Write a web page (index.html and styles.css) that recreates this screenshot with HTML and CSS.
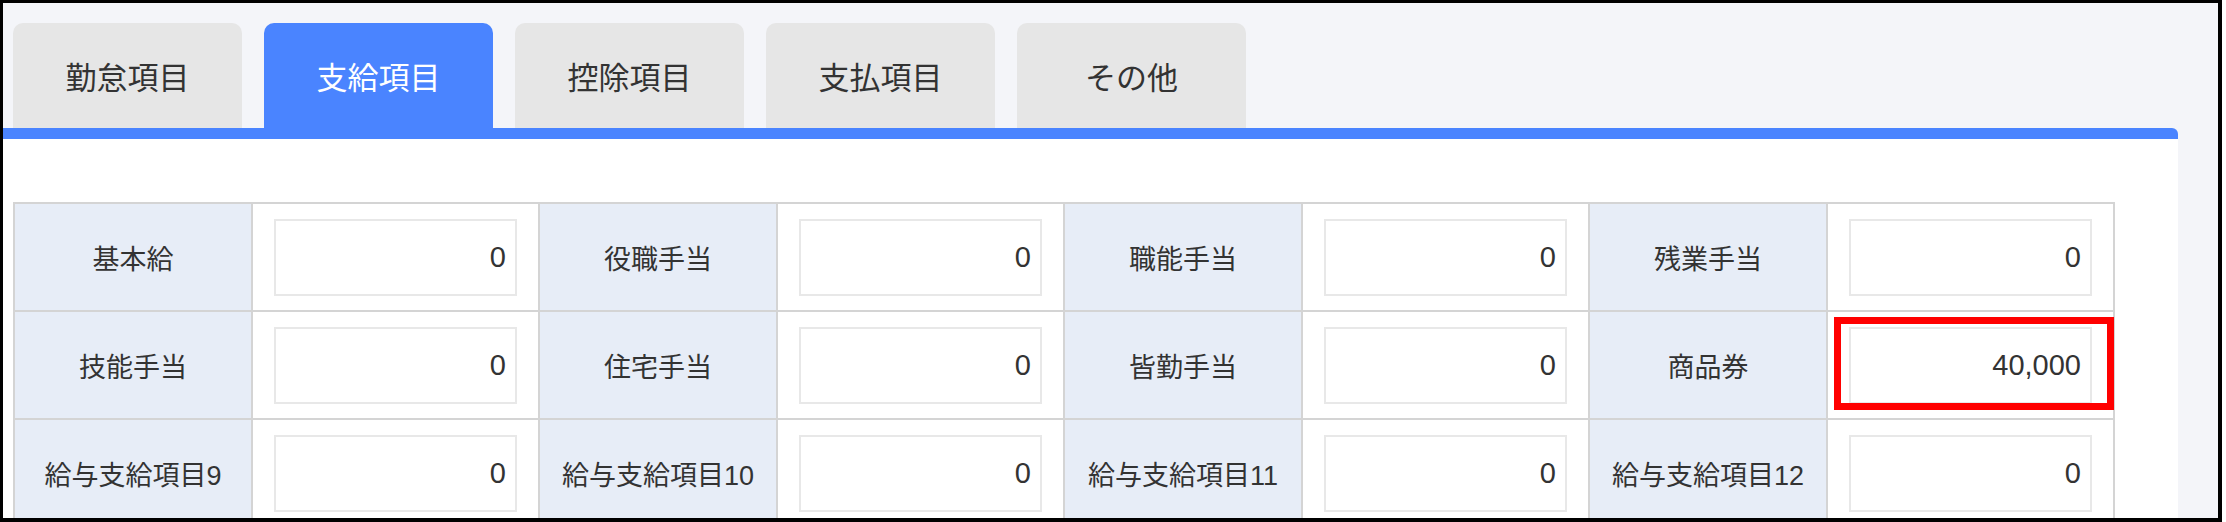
FILE: index.html
```html
<!DOCTYPE html>
<html lang="ja">
<head>
<meta charset="utf-8">
<title>支給項目</title>
<link rel="stylesheet" href="styles.css">
</head>
<body>
<div class="frame">
  <div class="tabs">
    <div class="tab">勤怠項目</div>
    <div class="tab active">支給項目</div>
    <div class="tab">控除項目</div>
    <div class="tab">支払項目</div>
    <div class="tab">その他</div>
  </div>
  <div class="panel">
    <div class="grid">
      <div class="label">基本給</div>
      <div class="field"><input class="num" type="text" value="0" readonly></div>
      <div class="label">役職手当</div>
      <div class="field"><input class="num" type="text" value="0" readonly></div>
      <div class="label">職能手当</div>
      <div class="field"><input class="num" type="text" value="0" readonly></div>
      <div class="label">残業手当</div>
      <div class="field"><input class="num" type="text" value="0" readonly></div>

      <div class="label">技能手当</div>
      <div class="field"><input class="num" type="text" value="0" readonly></div>
      <div class="label">住宅手当</div>
      <div class="field"><input class="num" type="text" value="0" readonly></div>
      <div class="label">皆勤手当</div>
      <div class="field"><input class="num" type="text" value="0" readonly></div>
      <div class="label">商品券</div>
      <div class="field highlighted"><input class="num" type="text" value="40,000" readonly><span class="mark"></span></div>

      <div class="label">給与支給項目9</div>
      <div class="field"><input class="num" type="text" value="0" readonly></div>
      <div class="label">給与支給項目10</div>
      <div class="field"><input class="num" type="text" value="0" readonly></div>
      <div class="label">給与支給項目11</div>
      <div class="field"><input class="num" type="text" value="0" readonly></div>
      <div class="label">給与支給項目12</div>
      <div class="field"><input class="num" type="text" value="0" readonly></div>
    </div>
  </div>
</div>
</body>
</html>
```

FILE: styles.css
```css
html, body {
  margin: 0;
  padding: 0;
  background: #ffffff;
}

body {
  font-family: "Liberation Sans", "Noto Sans CJK JP", sans-serif;
  color: #333333;
}

.frame {
  box-sizing: border-box;
  width: 2222px;
  height: 522px;
  border-style: solid;
  border-color: #000000;
  border-width: 3px 4px 4px 3px;
  background: #f4f5f9;
  overflow: hidden;
  display: flex;
  flex-direction: column;
}

.tabs {
  display: flex;
  gap: 22px;
  padding: 20px 0 0 10px;
  height: 105px;
}

.tab {
  width: 229px;
  height: 105px;
  box-sizing: border-box;
  border-radius: 10px 10px 0 0;
  background: #e6e6e6;
  color: #333333;
  font-size: 31px;
  display: flex;
  align-items: center;
  justify-content: center;
  padding-bottom: 1px;
}

.tab.active {
  background: #4a84ff;
  color: #ffffff;
}

.panel {
  flex: 1;
  margin-right: 40px;
  background: #ffffff;
  border-top: 11px solid #4a84ff;
  border-top-right-radius: 6px;
  padding: 63px 0 0 10px;
}

.grid {
  display: grid;
  grid-template-columns: 236px 285px 236px 285px 236px 285px 236px 285px;
  grid-auto-rows: 106px;
  gap: 2px;
  padding: 2px;
  background: #d4d4d4;
  width: max-content;
}

.label {
  background: #e7edf7;
  font-size: 27px;
  color: #333333;
  display: flex;
  align-items: center;
  justify-content: center;
  white-space: nowrap;
}

.field {
  background: #ffffff;
  display: flex;
  align-items: center;
  justify-content: center;
  position: relative;
}

.num {
  box-sizing: border-box;
  width: 243px;
  height: 77px;
  border: 2px solid #e8e8e8;
  border-radius: 0;
  background: #ffffff;
  padding: 0 9px 0 8px;
  margin: 0;
  font-family: "Liberation Sans", "Noto Sans CJK JP", sans-serif;
  font-size: 29px;
  color: #333333;
  text-align: right;
  outline: none;
}

.mark {
  position: absolute;
  left: 6px;
  top: 5px;
  width: 280px;
  height: 93px;
  box-sizing: border-box;
  border: 7px solid #ff0000;
  pointer-events: none;
}
```
